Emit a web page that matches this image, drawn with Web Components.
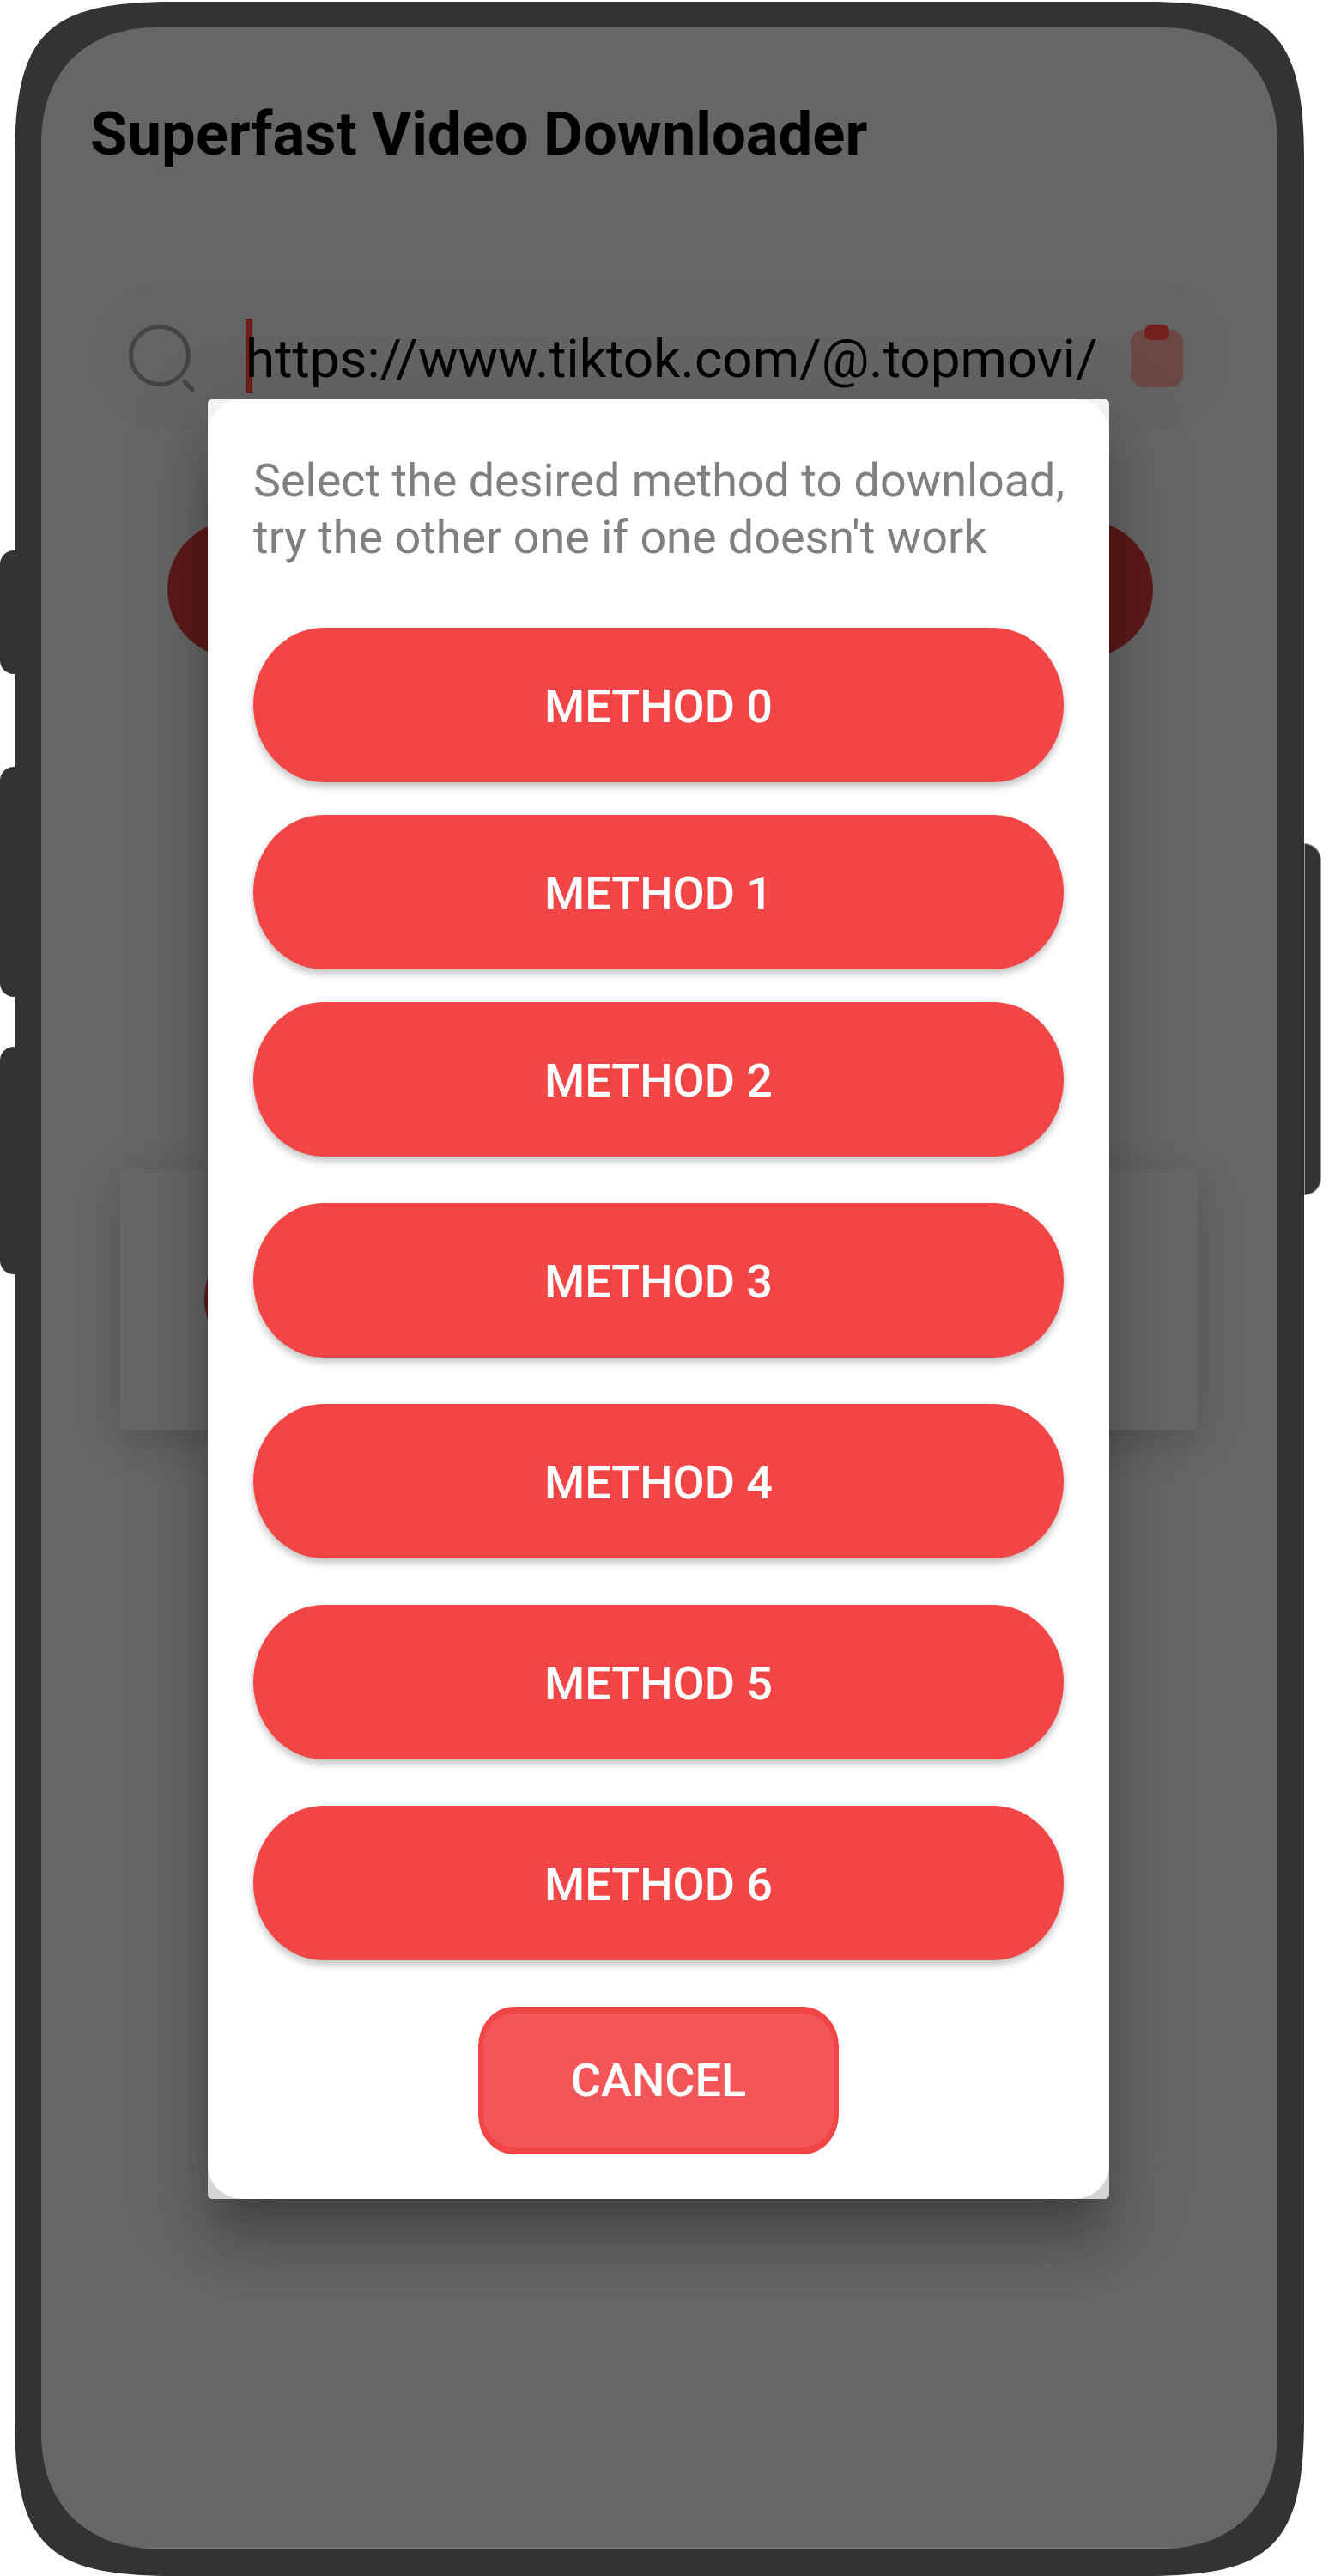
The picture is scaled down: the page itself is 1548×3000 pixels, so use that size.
<!DOCTYPE html>
<html>
<head>
<meta charset="utf-8">
<title>Superfast Video Downloader</title>
<style>
  html, body { margin: 0; padding: 0; background: #fff; }
  body { font-family: Roboto, "Liberation Sans", sans-serif; }
</style>
</head>
<body>
<phone-frame>
  <method-dialog slot="dialog" message="Select the desired method to download,&#10;try the other one if one doesn't work">
    <method-button>METHOD 0</method-button>
    <method-button>METHOD 1</method-button>
    <method-button>METHOD 2</method-button>
    <method-button>METHOD 3</method-button>
    <method-button>METHOD 4</method-button>
    <method-button>METHOD 5</method-button>
    <method-button>METHOD 6</method-button>
    <cancel-button slot="cancel">CANCEL</cancel-button>
  </method-dialog>
</phone-frame>

<script>
// rounded rect with a squircle corner; k is how far the control points sit from the corner
function squircle(w, h, r, k) {
  const c = r * k;
  return `M${r} 0H${w - r}C${w - c} 0 ${w} ${c} ${w} ${r}V${h - r}C${w} ${h - c} ${w - c} ${h} ${w - r} ${h}` +
    `H${r}C${c} ${h} 0 ${h - c} 0 ${h - r}V${r}C0 ${c} ${c} 0 ${r} 0Z`;
}

class PhoneFrame extends HTMLElement {
  constructor() {
    super();
    this.attachShadow({ mode: 'open' });
    this.shadowRoot.innerHTML = `
      <style>
        :host { display: block; width: 1548px; height: 3000px; position: relative; overflow: hidden; background: #fff; }
        .side { position: absolute; background: #333; }
        .left { left: 0; width: 30px; border-radius: 16px 0 0 16px; }
        .right {
          left: 1519px; width: 20px; top: 982px; height: 410px; box-sizing: border-box;
          border: 1px solid #999; border-radius: 0 20px 20px 0;
        }
        .body {
          position: absolute; left: 17px; top: 2px; width: 1502px; height: 2998px; box-sizing: border-box;
          background: #333; padding: 30px 31px 32px;
          clip-path: path('${squircle(1502, 2998, 185, 0.2)}');
        }
        .screen {
          position: relative; height: 100%; overflow: hidden; background: #666;
          display: flex; flex-direction: column;
          clip-path: path('${squircle(1440, 2936, 135, 0.38)}');
        }
        .screen::after { content: ""; position: absolute; left: 100px; right: 100px; bottom: 0; height: 1px; background: #7c7c7c; }
        h1 {
          margin: 0; padding: 86px 0 0 57px; font: 700 70.6px/76px Roboto, sans-serif; color: #000; white-space: nowrap;
        }
        .search {
          margin: 134px 56px 0 60px; height: 172px; border-radius: 86px; background: #646464; flex: none;
          display: flex; align-items: center; padding: 0 0 0 42px; box-sizing: border-box;
        }
        .search svg { flex: none; display: block; }
        .search-icon { margin-top: 5px; }
        .caret { flex: none; width: 8px; height: 87px; background: #6e1f1c; margin-left: 56px; }
        .url {
          width: 992px; flex: none; margin: 6px 0 0 -8px; white-space: nowrap;
          font: 400 62px/87px Roboto, sans-serif; color: #000;
        }
        .clip-icon { margin-left: 39px; }
        .go { margin: 106px 145px 0 147px; height: 160px; border-radius: 80px; background: #5c1a18; flex: none; }
        .card {
          margin: 595px 93px 0 92px; height: 304px; border-radius: 6px; background: #666; flex: none;
          box-shadow: 0 14px 50px rgba(0,0,0,.2);
          display: flex; align-items: center; padding-left: 98px; box-sizing: border-box;
        }
        .thumb { width: 160px; height: 160px; border-radius: 50%; background: #5c1a18; flex: none; }
      </style>
      <div class="side left" style="top:641px;height:144px"></div>
      <div class="side left" style="top:893px;height:268px"></div>
      <div class="side left" style="top:1219px;height:265px"></div>
      <div class="side right"></div>
      <div class="body">
        <div class="screen">
          <h1>Superfast Video Downloader</h1>
          <div class="search">
            <svg class="search-icon" width="80" height="80" viewBox="0 0 80 80">
              <circle cx="36" cy="37" r="33.5" fill="none" stroke="#444" stroke-width="5"/>
              <path d="M65 67.5l9 9" stroke="#444" stroke-width="5" stroke-linecap="round"/>
            </svg>
            <div class="caret"></div>
            <div class="url">https://www.tiktok.com/@.topmovi/</div>
            <svg class="clip-icon" width="62" height="73" viewBox="0 0 62 73">
              <rect x="0" y="6" width="61" height="67" rx="15" fill="#6b4845"/>
              <rect x="16" y="0" width="29" height="18" rx="8" fill="#741f1c"/>
            </svg>
          </div>
          <div class="go"></div>
          <div class="card"><div class="thumb"></div></div>
        </div>
      </div>
      <slot name="dialog"></slot>
    `;
  }
}

class MethodDialog extends HTMLElement {
  constructor() {
    super();
    this.attachShadow({ mode: 'open' });
    this.shadowRoot.innerHTML = `
      <style>
        :host {
          display: block; position: absolute; left: 242px; top: 465px; width: 1050px; height: 2096px;
          background: linear-gradient(#f2f2f2 60%, #d4d4d4); border-radius: 5px;
          box-shadow: 0 60px 60px rgba(0,0,0,.16), 0 20px 90px 16px rgba(0,0,0,.12), 0 30px 40px -20px rgba(0,0,0,.2);
        }
        .sheet { height: 100%; box-sizing: border-box; padding: 62px 53px 0; background: #fff; border-radius: 40px; }
        p { margin: 0 0 72px; font: 400 53.9px/66px Roboto, sans-serif; color: #808080; white-space: pre; }
        .methods { display: grid; gap: 54px; }
        .methods ::slotted(method-button:nth-child(-n+2)) { margin-bottom: -16px; }
        .cancel { display: flex; justify-content: center; margin-top: 54px; }
      </style>
      <div class="sheet">
        <p></p>
        <div class="methods"><slot></slot></div>
        <div class="cancel"><slot name="cancel"></slot></div>
      </div>
    `;
    this.shadowRoot.querySelector('p').textContent = this.getAttribute('message');
  }
}

class MethodButton extends HTMLElement {
  constructor() {
    super();
    this.attachShadow({ mode: 'open' });
    this.shadowRoot.innerHTML = `
      <style>
        :host {
          display: flex; align-items: center; justify-content: center; height: 180px;
          box-sizing: border-box; padding-top: 3px;
          background: #f24545; color: #fff; border-radius: 82px / 90px;
          font: 500 54px/60px Roboto, sans-serif;
          box-shadow: 0 5px 10px rgba(0,0,0,.25);
        }
      </style>
      <slot></slot>
    `;
  }
}

class CancelButton extends HTMLElement {
  constructor() {
    super();
    this.attachShadow({ mode: 'open' });
    this.shadowRoot.innerHTML = `
      <style>
        :host {
          display: flex; align-items: center; justify-content: center; width: 420px; height: 172px;
          box-sizing: border-box; background: #f35658; border: solid #f24545; border-width: 8px 6px; border-radius: 42px / 46px;
          color: #fff; font: 500 54px/60px Roboto, sans-serif;
        }
      </style>
      <slot></slot>
    `;
  }
}

customElements.define('phone-frame', PhoneFrame);
customElements.define('method-dialog', MethodDialog);
customElements.define('method-button', MethodButton);
customElements.define('cancel-button', CancelButton);
</script>
</body>
</html>
